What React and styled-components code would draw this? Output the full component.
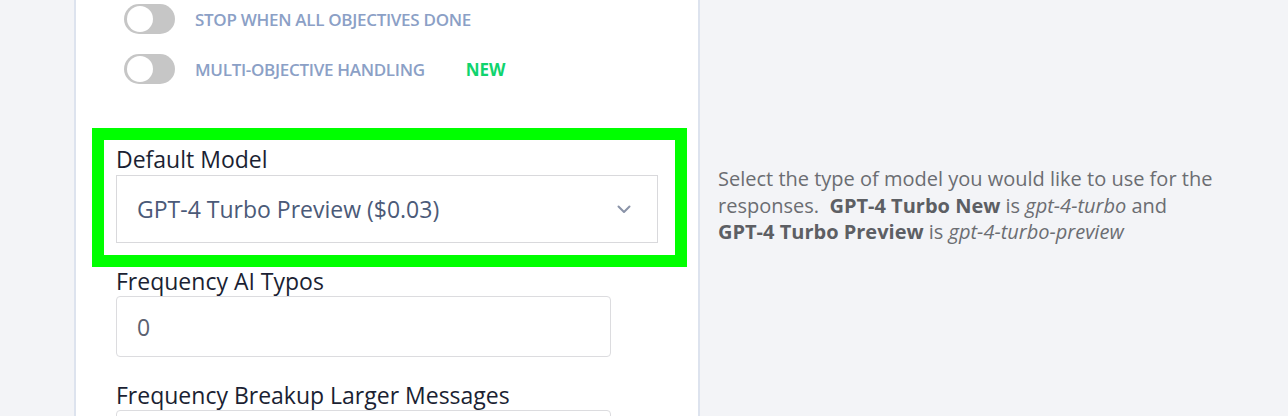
import styled, { createGlobalStyle } from "styled-components";

const GlobalStyle = createGlobalStyle`
  html, body {
    margin: 0;
    padding: 0;
    background: #f3f4f7;
    font-family: "Open Sans", "Liberation Sans", sans-serif;
  }
`

const Page = styled.div`
  display: flex;
  align-items: stretch;
  width: 1288px;
  height: 416px;
  overflow: hidden;
  background: #f3f4f7;
`

const Gutter = styled.div`
  width: 74px;
  flex-shrink: 0;
`

const Card = styled.div`
  flex-shrink: 0;
  width: 582px;
  padding: 4px 0 0 40px;
  background: #ffffff;
  border-left: 2px solid #dde3ee;
  border-right: 2px solid #dde3ee;
`

const ToggleList = styled.div`
  display: flex;
  flex-direction: column;
  gap: 20px;
  margin-left: 8px;
`

const ToggleRow = styled.div`
  display: flex;
  align-items: center;
  height: 30px;
`

const Switch = styled.div`
  position: relative;
  width: 51px;
  height: 30px;
  border-radius: 15px;
  background: #c6c6c6;
  flex-shrink: 0;

  &::after {
    content: "";
    position: absolute;
    top: 2px;
    left: 3px;
    width: 26px;
    height: 26px;
    border-radius: 50%;
    background: #ffffff;
  }
`

const ToggleLabel = styled.span`
  margin-left: 20px;
  font-size: 17px;
  font-weight: 600;
  letter-spacing: -0.3px;
  color: #8ba0c6;
  text-transform: uppercase;
`

const NewBadge = styled.span`
  margin-left: 41px;
  font-size: 17px;
  font-weight: 700;
  color: #10d46e;
`

const Highlight = styled.div`
  width: 542px;
  margin: 44px 0 0 -24px;
  padding: 5px 17px 12px 12px;
  border: 12px solid #00ff00;
  background: #ffffff;
`

const Field = styled.div`
  display: flex;
  flex-direction: column;
  margin-top: ${p => p.$top || 0}px;
`

const Label = styled.label`
  font-size: 23px;
  line-height: 28px;
  color: #1b1f33;
`

const Select = styled.div`
  display: flex;
  align-items: center;
  justify-content: space-between;
  box-sizing: border-box;
  height: 68px;
  margin-top: 2px;
  padding: 0 26px 0 20px;
  border: 1px solid #d9d9dc;
  font-size: 23px;
  color: #4b5a78;
`

const Input = styled.div`
  display: flex;
  align-items: center;
  box-sizing: border-box;
  width: 495px;
  height: 61px;
  margin-top: 1px;
  padding: 0 20px;
  border: 1px solid #dcdcdf;
  border-radius: 4px;
  font-size: 23px;
  color: #5b6170;
`

const Side = styled.div`
  flex: 1;
  padding: 166px 60px 0 18px;
`

const Help = styled.p`
  margin: 0;
  max-width: 500px;
  font-size: 20px;
  line-height: 26.5px;
  color: #6b6d72;

  b {
    font-weight: 700;
    color: #5d5f64;
    white-space: nowrap;
  }
`

const Chevron = () => (
  <svg width="14" height="9" viewBox="0 0 14 9" fill="none">
    <path d="M1.5 1.5L7 7L12.5 1.5" stroke="#8a93a8" strokeWidth="2" strokeLinecap="round" strokeLinejoin="round" />
  </svg>
)

function App() {
  return (
    <Page>
      <GlobalStyle />
      <Gutter />
      <Card>
        <ToggleList>
          <ToggleRow>
            <Switch />
            <ToggleLabel>Stop when all objectives done</ToggleLabel>
          </ToggleRow>
          <ToggleRow>
            <Switch />
            <ToggleLabel>Multi-objective handling</ToggleLabel>
            <NewBadge>NEW</NewBadge>
          </ToggleRow>
        </ToggleList>

        <Highlight>
          <Field>
            <Label>Default Model</Label>
            <Select>
              GPT-4 Turbo Preview ($0.03)
              <Chevron />
            </Select>
          </Field>
        </Highlight>

        <Field>
          <Label>Frequency AI Typos</Label>
          <Input>0</Input>
        </Field>

        <Field $top={24}>
          <Label>Frequency Breakup Larger Messages</Label>
          <Input />
        </Field>
      </Card>
      <Side>
        <Help>
          Select the type of model you would like to use for the responses.&nbsp; <b>GPT-4 Turbo New</b> is <i>gpt-4-turbo</i> and <b>GPT-4 Turbo Preview</b> is <i>gpt-4-turbo-preview</i>
        </Help>
      </Side>
    </Page>
  );
}

export default App;
